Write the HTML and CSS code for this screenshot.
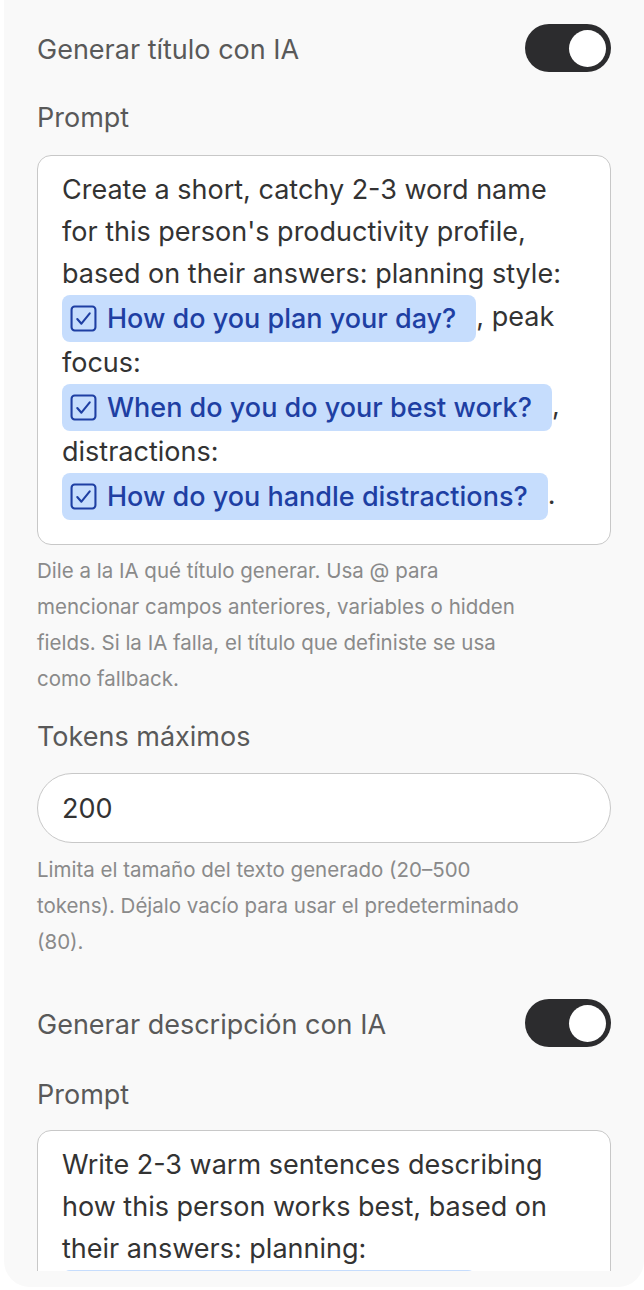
FILE: index.html
```html
<!DOCTYPE html>
<html lang="es">
<head>
    <meta charset="UTF-8">
    <title>Ajustes IA</title>
    <link rel="stylesheet" href="styles.css">
</head>
<body>
    <div class="panel">
        <div class="scroll">
            <div class="toggle-row">
                <span class="row-label">Generar título con IA</span>
                <span class="switch on"><span class="knob"></span></span>
            </div>

            <div class="field-label">Prompt</div>
            <div class="prompt-box">
                Create a short, catchy 2-3 word name for this person's productivity profile, based on their answers: planning style:
                <span class="chip"><svg class="chip-icon" viewBox="0 0 26 26"><rect x="1.5" y="1.5" width="23" height="23" rx="3"/><path d="M7 13.5l4 4.5 8-10"/></svg>How do you plan your day?</span>, peak focus:
                <span class="chip"><svg class="chip-icon" viewBox="0 0 26 26"><rect x="1.5" y="1.5" width="23" height="23" rx="3"/><path d="M7 13.5l4 4.5 8-10"/></svg>When do you do your best work?</span>, distractions:
                <span class="chip"><svg class="chip-icon" viewBox="0 0 26 26"><rect x="1.5" y="1.5" width="23" height="23" rx="3"/><path d="M7 13.5l4 4.5 8-10"/></svg>How do you handle distractions?</span>.
            </div>
            <p class="help">Dile a la IA qué título generar. Usa @ para mencionar campos anteriores, variables o hidden fields. Si la IA falla, el título que definiste se usa como fallback.</p>

            <div class="field-label tokens-label">Tokens máximos</div>
            <div class="text-input">200</div>
            <p class="help tokens-help">Limita el tamaño del texto generado (20–500 tokens). Déjalo vacío para usar el predeterminado (80).</p>

            <div class="toggle-row second">
                <span class="row-label">Generar descripción con IA</span>
                <span class="switch on"><span class="knob"></span></span>
            </div>

            <div class="field-label second-prompt">Prompt</div>
            <div class="prompt-box">
                Write 2-3 warm sentences describing how this person works best, based on their answers: planning:
                <span class="chip"><svg class="chip-icon" viewBox="0 0 26 26"><rect x="1.5" y="1.5" width="23" height="23" rx="3"/><path d="M7 13.5l4 4.5 8-10"/></svg>How do you plan your day?</span>, focus:
                <span class="chip"><svg class="chip-icon" viewBox="0 0 26 26"><rect x="1.5" y="1.5" width="23" height="23" rx="3"/><path d="M7 13.5l4 4.5 8-10"/></svg>When do you do your best work?</span>.
            </div>
        </div>
    </div>
</body>
</html>
```

FILE: styles.css
```css
body { margin: 0; background: #fff; font-family: Inter, "Liberation Sans", sans-serif; }
.panel { margin-left: 4px; width: 640px; height: 1287px; background: #f9f9f9; border-radius: 0 0 26px 26px; box-sizing: border-box; }
.scroll { height: 1271px; overflow: hidden; padding: 0 33px; }

.toggle-row { display: flex; align-items: center; justify-content: space-between; height: 48px; margin-top: 24px; }
.toggle-row.second { margin-top: 39px; }
.row-label { font-size: 27px; color: #595959; padding-top: 3px; }
.switch { width: 86px; height: 48px; border-radius: 24px; background: #2c2c2e; display: flex; align-items: center; justify-content: flex-end; padding: 0 5px; box-sizing: border-box; }
.knob { width: 37px; height: 37px; border-radius: 50%; background: #fff; }

.field-label { font-size: 27px; color: #595959; line-height: 36px; margin: 28px 0 19px; }
.tokens-label { margin-top: 22px; margin-bottom: 18px; }
.second-prompt { margin-top: 30px; margin-bottom: 17px; }

.prompt-box { background: #fff; border: 1.5px solid #c8c8c8; border-radius: 14px; padding: 13px 24px 24px; font-size: 27px; line-height: 42px; color: #333; }
.chip { display: inline-flex; align-items: center; background: #c6ddfd; color: #1e3fa3; font-weight: 500; border-radius: 8px; padding: 0 20px 0 8px; height: 47px; line-height: 47px; vertical-align: middle; }
.chip-icon { width: 27px; height: 27px; margin-right: 10px; fill: none; stroke: #1e3fa3; stroke-width: 2; stroke-linecap: round; stroke-linejoin: round; }

.help { font-size: 20.5px; line-height: 36px; color: #8a8a8a; margin: 8px 0 0; max-width: 485px; }
.tokens-help { margin-top: 9px; }

.text-input { height: 70px; box-sizing: border-box; border: 1.5px solid #c8c8c8; border-radius: 35px; background: #fff; padding: 0 24px; display: flex; align-items: center; font-size: 27px; color: #333; }
```
